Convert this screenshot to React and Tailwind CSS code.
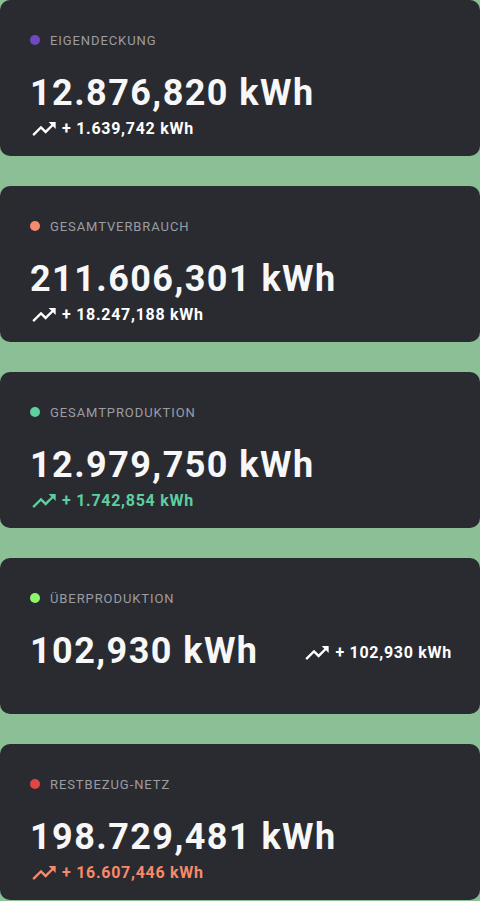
import { MdTrendingUp } from "react-icons/md";

const kacheln = [
  { titel: "Eigendeckung", punkt: "bg-[#7048c0]", wert: "12.876,820 kWh", delta: "+ 1.639,742 kWh", farbe: "text-white" },
  { titel: "Gesamtverbrauch", punkt: "bg-[#f8896a]", wert: "211.606,301 kWh", delta: "+ 18.247,188 kWh", farbe: "text-white" },
  { titel: "Gesamtproduktion", punkt: "bg-[#5ed1a0]", wert: "12.979,750 kWh", delta: "+ 1.742,854 kWh", farbe: "text-[#5ccfa0]" },
  { titel: "Überproduktion", punkt: "bg-[#8cf86c]", wert: "102,930 kWh", delta: "+ 102,930 kWh", farbe: "text-white" },
  { titel: "Restbezug-Netz", punkt: "bg-[#e04646]", wert: "198.729,481 kWh", delta: "+ 16.607,446 kWh", farbe: "text-[#f8896a]" },
];

function Kachel({ k }) {
  return (
    <div className="h-[156px] rounded-[10px] bg-[#2a2b31] pl-[30px] pr-[28px] pt-[34px]">
      <div className="flex items-center gap-[10px] h-[12px]">
        <span className={`w-[10px] h-[10px] rounded-full ${k.punkt}`} />
        <span className="text-[13px] leading-none uppercase tracking-[0.07em] text-[#9c9da2]">{k.titel}</span>
      </div>
      <div className="mt-[25px] flex flex-wrap items-center justify-between">
        <div className="text-[36px] leading-[44px] font-bold tracking-[0.04em] text-[#f7f7f8]">{k.wert}</div>
        <div className={`flex items-center gap-1 h-[22px] mt-[3px] ${k.farbe}`}>
          <MdTrendingUp size={28} />
          <span className="text-[16px] font-bold tracking-[0.045em]">{k.delta}</span>
        </div>
      </div>
    </div>
  );
}

export default function App() {
  return (
    <div className="min-h-screen bg-[#8bbf96] flex flex-col gap-[30px]" style={{ fontFamily: "Roboto, 'Liberation Sans', sans-serif" }}>
      {kacheln.map(k => (
        <Kachel key={k.titel} k={k} />
      ))}
    </div>
  );
}
